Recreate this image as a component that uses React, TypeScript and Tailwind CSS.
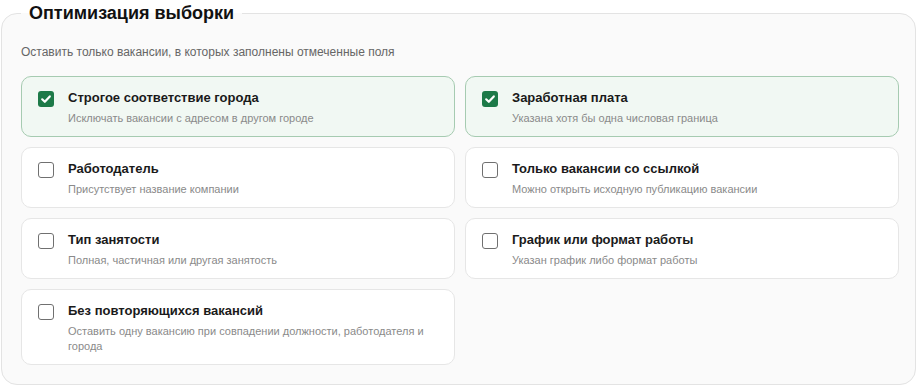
import React from "react";

type Item = { title: string; sub: string; checked: boolean };

const items: Item[] = [
  { title: "Строгое соответствие города", sub: "Исключать вакансии с адресом в другом городе", checked: true },
  { title: "Заработная плата", sub: "Указана хотя бы одна числовая граница", checked: true },
  { title: "Работодатель", sub: "Присутствует название компании", checked: false },
  { title: "Только вакансии со ссылкой", sub: "Можно открыть исходную публикацию вакансии", checked: false },
  { title: "Тип занятости", sub: "Полная, частичная или другая занятость", checked: false },
  { title: "График или формат работы", sub: "Указан график либо формат работы", checked: false },
  {
    title: "Без повторяющихся вакансий",
    sub: "Оставить одну вакансию при совпадении должности, работодателя и города",
    checked: false,
  },
];

function Box({ checked }: { checked: boolean }) {
  if (checked) {
    return (
      <span className="mt-[3px] flex h-4 w-4 shrink-0 items-center justify-center rounded-[3px] bg-[#1d7a48]">
        <svg width="12" height="12" viewBox="0 0 12 12" fill="none">
          <path d="M2.2 6.3 L4.8 8.8 L9.8 3.4" stroke="#fff" strokeWidth="2.2" strokeLinecap="round" strokeLinejoin="round" />
        </svg>
      </span>
    );
  }
  return <span className="mt-[3px] block h-4 w-4 shrink-0 rounded-[3px] border border-[#707070] bg-white" />;
}

function Card({ item }: { item: Item }) {
  return (
    <div
      className={
        item.checked
          ? "flex items-start gap-[14px] rounded-[10px] border border-[#a6cbb1] bg-[#f1f8f3] pl-4 pr-4 pt-[11px] pb-[10px]"
          : "flex items-start gap-[14px] rounded-[10px] border border-[#e6e6e6] bg-white pl-4 pr-4 pt-[11px] pb-[10px]"
      }
    >
      <Box checked={item.checked} />
      <div className="flex flex-col">
        <div className="text-[13px] leading-[20px] font-bold text-[#1a1a1a]">{item.title}</div>
        <div className="mt-[3px] text-[11px] leading-[15px] text-[#8a8a8a]">{item.sub}</div>
      </div>
    </div>
  );
}

export default function App() {
  return (
    <div className="min-h-[386px] bg-white" style={{ fontFamily: '"Liberation Sans", Arial, sans-serif' }}>
      <fieldset className="ml-[1px] w-[915px] rounded-[16px] border border-[#e3e3e3] bg-[#fafafa] pl-[19px] pr-[16px] pt-[18px] pb-[19px]">
        <legend className="px-2 text-[18px] leading-[26px] font-bold text-[#111]">Оптимизация выборки</legend>
        <div className="text-[12px] leading-[16px] text-[#666]">Оставить только вакансии, в которых заполнены отмеченные поля</div>
        <div className="mt-[16px] grid grid-cols-2 gap-[10px]">
          {items.map((it) => (
            <Card key={it.title} item={it} />
          ))}
        </div>
      </fieldset>
    </div>
  );
}
